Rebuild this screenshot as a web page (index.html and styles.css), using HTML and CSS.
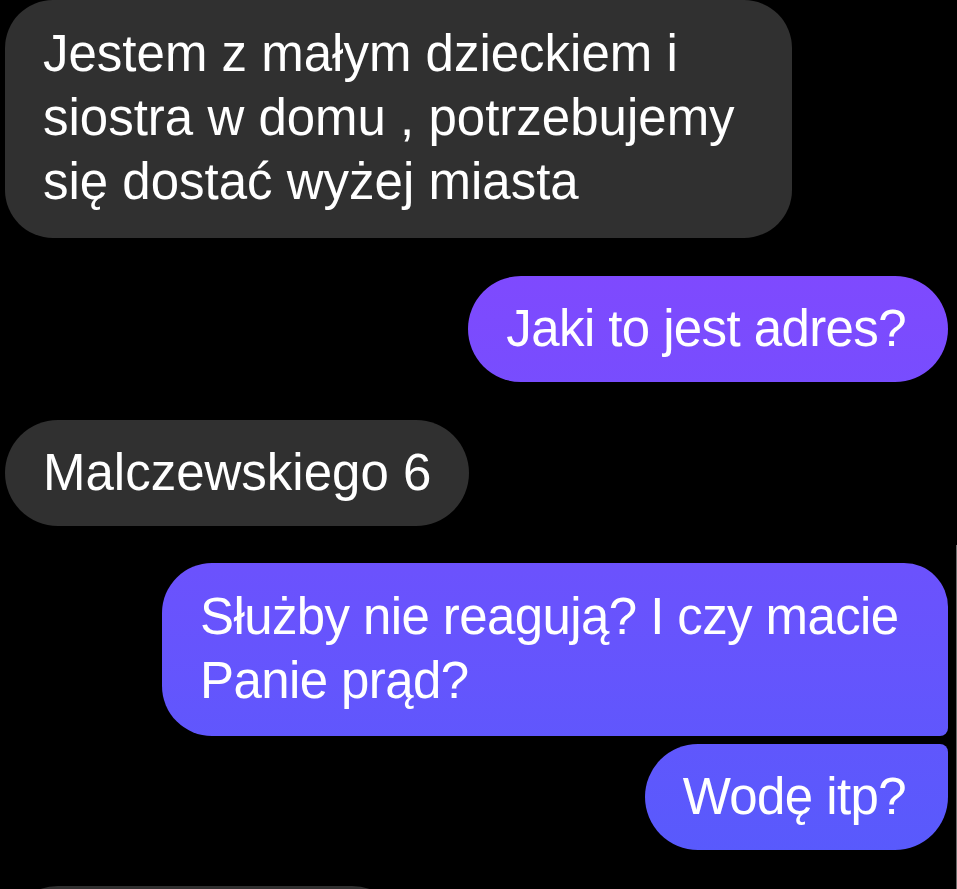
FILE: index.html
```html
<!DOCTYPE html>
<html lang="pl">
<head>
<meta charset="utf-8">
<title>Czat</title>
<link rel="stylesheet" href="styles.css">
</head>
<body>
<div class="screen">
  <div class="chat">
    <div class="msg in first">Jestem z małym dzieckiem i siostra w domu , potrzebujemy się dostać wyżej miasta</div>
    <div class="msg out single gap">Jaki to jest adres?</div>
    <div class="msg in single gap">Malczewskiego 6</div>
    <div class="msg out group-top gap-s">Służby nie reagują? I czy macie Panie prąd?</div>
    <div class="msg out group-bottom gap-xs">Wodę itp?</div>
    <div class="msg in single next gap-t"></div>
  </div>
  <div class="edge"></div>
</div>
</body>
</html>
```

FILE: styles.css
```css
html, body {
  margin: 0;
  padding: 0;
  background: #000;
  height: 100%;
  overflow: hidden;
}

.screen {
  position: relative;
  height: 889px;
  overflow: hidden;
}

.chat {
  display: flex;
  flex-direction: column;
  padding: 0 9px 0 5px;
  font-family: "Liberation Sans", Arial, sans-serif;
  font-size: 51px;
  line-height: 64px;
  color: #fff;
}

.msg {
  box-sizing: border-box;
  padding: 21px 38px;
  max-width: 787px;
  width: fit-content;
}

.in {
  align-self: flex-start;
  background: #303030;
  border-radius: 50px;
}

.out {
  align-self: flex-end;
  max-width: 786px;
  padding-left: 38px;
  padding-right: 42px;
  letter-spacing: -0.6px;
  background: linear-gradient(180deg, #9142ff 0px, #565bfc 889px);
  background-attachment: fixed;
  border-radius: 53px;
}

.first {
  padding-top: 22px;
  padding-bottom: 24px;
  border-radius: 48px;
}

.single {
  border-radius: 53px;
}

.group-top {
  padding-top: 22px;
  padding-bottom: 23px;
  padding-right: 40px;
  border-radius: 50px 44px 8px 50px;
}

.group-bottom {
  border-radius: 53px 8px 53px 53px;
}

.gap { margin-top: 38px; }
.gap-s { margin-top: 37px; }
.gap-xs { margin-top: 8px; }
.gap-t { margin-top: 36px; }

.next {
  width: 400px;
  height: 106px;
}

.edge {
  position: absolute;
  right: 0;
  top: 545px;
  bottom: 0;
  width: 1px;
  background: #6a6a6a;
}
```
